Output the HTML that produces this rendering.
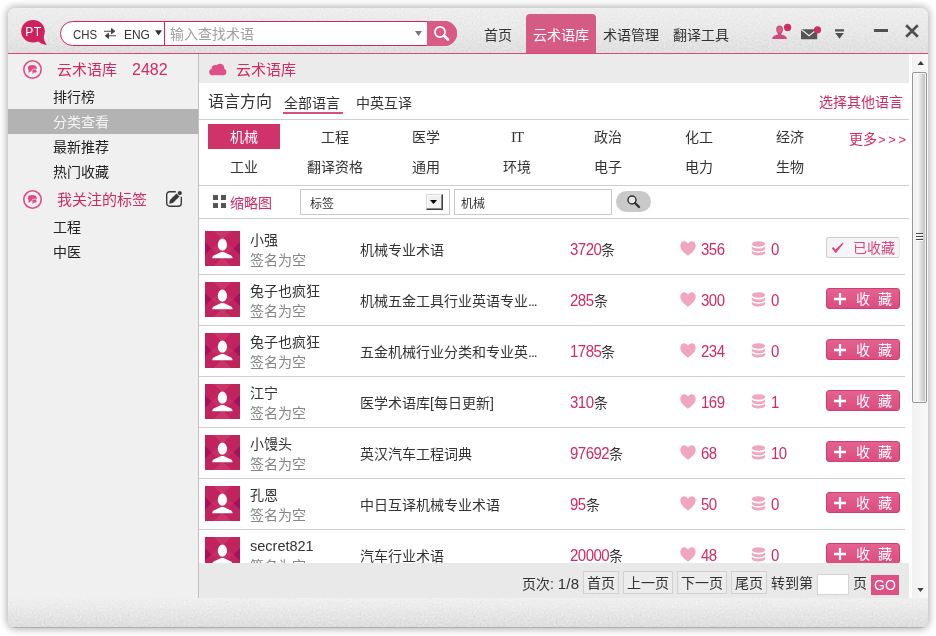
<!DOCTYPE html>
<html lang="zh-CN">
<head>
<meta charset="utf-8">
<title>云术语库</title>
<style>
*{box-sizing:border-box;margin:0;padding:0}
html,body{width:936px;height:636px;overflow:hidden;background:#fff}
body{font-family:"Liberation Sans",sans-serif;font-size:14px;color:#333;position:relative}
.abs{position:absolute}
#win{position:absolute;left:8px;top:8px;width:920px;height:620px;border-radius:7px 7px 8px 8px;background:#f0f0f0;box-shadow:0 0 7px 2px rgba(0,0,0,.27);overflow:hidden}
#hdr{position:absolute;left:0;top:0;width:920px;height:46px;background:linear-gradient(#eeeeee,#e9e9e9 50%,#dfdfdf)}
#hline{position:absolute;left:0;top:45px;width:920px;height:1px;background:#d9477a}
#side{position:absolute;left:0;top:46px;width:190px;height:544px;background:#f0f0f0}
#vline{position:absolute;left:190px;top:46px;width:1px;height:544px;background:#c0c0c0}
#main{position:absolute;left:191px;top:46px;width:710px;height:544px;background:#fff;overflow:hidden}
#gap{position:absolute;left:901px;top:46px;width:3px;height:544px;background:#fff}
#sb{position:absolute;left:904px;top:46px;width:16px;height:544px;background:linear-gradient(90deg,#f1f1f1,#f9f9f9)}
#foot{position:absolute;left:0;top:590px;width:920px;height:30px;background:linear-gradient(#f0f0f0,#e8e8e8 50%,#dedede);border-bottom:1px solid #aeaeae}
.t{position:absolute;white-space:nowrap;line-height:20px;height:20px}
.pk{color:#d12a65}
.hl{position:absolute;height:1px;background:#cfcfcf}

#pill{left:52px;top:13px;width:397px;height:25px;border:1.500px solid #d2255f;border-radius:13px;background:#fff}
#pillL{left:52px;top:13px;width:105px;height:25px;border-right:1.500px solid #d2255f;color:#333}
#sbtn{left:419px;top:13px;width:30px;height:25px;background:#d85a85;border-radius:0 13px 13px 0}
#tab{left:518px;top:6px;width:70px;height:40px;background:#d55b85;border-radius:4px 4px 0 0}
.nav{font-size:14px;color:#333}

.si{left:45px;font-size:14px;color:#222}
.ct{width:100px;text-align:center;font-size:14px;color:#333}
.row{position:absolute;left:0;width:710px;height:51px}
.num{font-size:15px}
.btn{left:627px;top:18px;width:74px;height:21px;border-radius:3px;line-height:20px}
.btn .t{line-height:20px}
.fav{background:#f5f5f5;border:1px solid #cfcfcf;border-right-color:#eee}
.fav .pk{color:#df4480}
.fav .t{top:0 !important}
.add{background:linear-gradient(#e4628f,#dc4c80);border:1px solid #cf3d72}

#pg{left:0;top:509px;width:710px;height:35px;background:#e9e9e9}
.pb{top:8px;height:23px;border:1px solid #d2d2d2;background:#ececec;text-align:center;line-height:22px;font-size:14px;color:#333}
#thumb{left:0;top:18px;width:15px;height:331px;border:1px solid #959595;border-radius:2px;box-shadow:inset 0 0 0 1px rgba(255,255,255,.75);background:linear-gradient(90deg,#e8e8e8,#f8f8f8 35%,#d4d4d6 70%,#bfbfc2)}

.nar{display:inline-block;transform:scaleX(.88);transform-origin:0 50%}
.num{letter-spacing:-.5px;display:inline-block;transform:scaleY(1.07);transform-origin:0 76%}
.el{letter-spacing:-1px}
.nzo{mix-blend-mode:overlay;opacity:.85}
</style>
</head>
<body>
<svg width="0" height="0" style="position:absolute"><filter id="nz" x="0" y="0" width="100%" height="100%" color-interpolation-filters="sRGB"><feTurbulence type="fractalNoise" baseFrequency=".5" numOctaves="2" seed="7" result="t"/><feColorMatrix type="matrix" values=".33 .33 .33 0 0  .33 .33 .33 0 0  .33 .33 .33 0 0  0 0 0 0 1"/></filter></svg>
<div id="win">
  <div id="hdr"><svg class="abs nzo" style="left:0;top:0" width="920" height="46"><rect width="920" height="46" filter="url(#nz)"/></svg>
    <svg class="abs" style="left:12px;top:10px" width="30" height="30" viewBox="0 0 30 30"><ellipse cx="13" cy="13.200" rx="11.800" ry="11.300" fill="#d0215f"/><path d="M23.800 17.500C23.600 21.500 24.800 24.600 27 26.900 23.300 26.700 20.300 25.400 17.500 23z" fill="#d0215f"/><text x="13.500" y="18" font-family="Liberation Sans,sans-serif" font-size="12" fill="#fff" text-anchor="middle" letter-spacing=".6">PT</text></svg>
    <div class="abs" id="pill"></div>
    <div class="abs" id="pillL"><span class="t nar" style="left:13px;top:4px;font-size:13px">CHS</span><svg class="abs" style="left:43px;top:7px" width="14" height="11" viewBox="0 0 14 11"><path d="M1 3.200h9.500M8.500 0.800l3 2.400-3 2.400zM13 7.800H3.500M5.500 5.400l-3 2.400 3 2.400z" stroke="#484848" stroke-width="1.100" fill="#484848" stroke-linejoin="round"/></svg><span class="t nar" style="left:63.500px;top:4px;font-size:13px;transform:scaleX(.92)">ENG</span><svg class="abs" style="left:95px;top:9px" width="7" height="5.500" viewBox="0 0 8 6"><path d="M0 0h8L4 6z" fill="#333"/></svg></div>
    <span class="t" style="left:162px;top:16px;font-size:14px;color:#a0a0a0">输入查找术语</span>
    <svg class="abs" style="left:407px;top:23px" width="7" height="5" viewBox="0 0 7 5"><path d="M0 0h7L3.500 5z" fill="#777"/></svg>
    <div class="abs" id="sbtn"><svg class="abs" style="left:5px;top:4px" width="18" height="18" viewBox="0 0 18 18"><circle cx="8" cy="7" r="5.100" fill="none" stroke="#fff" stroke-width="1.700"/><path d="M12 10.800l4 3.600" stroke="#fff" stroke-width="2.700" stroke-linecap="round"/></svg></div>
    <span class="t nav" style="left:476px;top:17px">首页</span>
    <div class="abs" id="tab"><span class="t" style="left:7px;top:11px;color:#fff;font-size:14px">云术语库</span></div>
    <span class="t nav" style="left:595px;top:17px">术语管理</span>
    <span class="t nav" style="left:665px;top:17px">翻译工具</span>
    <svg class="abs" style="left:763px;top:15px" width="22" height="18" viewBox="0 0 22 18"><defs><linearGradient id="ug" x1="0" y1="0" x2="0" y2="1"><stop offset="0" stop-color="#c0507a"/><stop offset="1" stop-color="#d4477a"/></linearGradient></defs><path d="M8.600 2.600c2.200 0 3.400 1.600 3.400 3.700 0 1.800-.8 3.300-1.800 4.100v1c3.300.9 5.600 1.800 5.800 4.700H1.200c.2-2.900 2.500-3.800 5.800-4.700v-1C6 9.600 5.200 8.100 5.200 6.300c0-2.100 1.200-3.700 3.400-3.700z" fill="url(#ug)"/><ellipse cx="8.600" cy="6.600" rx="2.100" ry="2.900" fill="#e06a94" opacity=".7"/><circle cx="16.600" cy="4.400" r="3.600" fill="#d42a63"/></svg>
    <svg class="abs" style="left:792px;top:18px" width="22" height="14" viewBox="0 0 22 14"><path d="M1 3.200h16.200v10H1z" fill="#555"/><path d="M1.300 3.500l7.800 6.200 7.800-6.200" fill="none" stroke="#e8e8e8" stroke-width="1.200"/><circle cx="17.500" cy="3.800" r="3.600" fill="#d42a63"/></svg>
    <svg class="abs" style="left:826px;top:20px" width="11" height="11" viewBox="0 0 11 11"><path d="M1 1.200h9v2.300h-9zM1.200 5h8.600l-4.300 5.700z" fill="#505050"/></svg>
    <div class="abs" style="left:866px;top:21px;width:14px;height:3px;background:#505050"></div>
    <svg class="abs" style="left:896px;top:15px" width="16" height="16" viewBox="0 0 16 16"><path d="M2.200 2.200l11.600 11.600M13.800 2.200L2.200 13.800" stroke="#505050" stroke-width="2.700" stroke-linecap="butt"/></svg>
  </div>
  <div id="hline"></div>
  <div id="side">
    <svg class="abs" style="left:14px;top:5px" width="21" height="21" viewBox="0 0 21 21"><circle cx="10.500" cy="10.500" r="8.700" fill="none" stroke="#e04a82" stroke-width="1.600"/><ellipse cx="10.300" cy="9.100" rx="4.500" ry="3.100" fill="#e04a82"/><path d="M7 10.500L6.300 14.100 9.800 11.800z" fill="#e04a82"/><rect x="9.850" y="10.200" width="5.100" height="3.800" rx="1.700" fill="#e04a82" stroke="#f0f0f0" stroke-width=".8"/><path d="M10.600 13.200L10.200 15 12.400 13.800z" fill="#e04a82"/></svg>
    <span class="t pk" style="left:49px;top:6px;font-size:15px">云术语库</span><span class="t pk" style="left:124px;top:6px;font-size:16px">2482</span>
    <span class="t si" style="top:33px">排行榜</span>
    <div class="abs" style="left:0;top:55px;width:190px;height:25px;background:#b3b3b3"></div>
    <span class="t si" style="top:58px;color:#f4f4f4">分类查看</span>
    <span class="t si" style="top:83px">最新推荐</span>
    <span class="t si" style="top:108px">热门收藏</span>
    <svg class="abs" style="left:14px;top:135px" width="21" height="21" viewBox="0 0 21 21"><circle cx="10.500" cy="10.500" r="8.700" fill="none" stroke="#e04a82" stroke-width="1.600"/><ellipse cx="10.300" cy="9.100" rx="4.500" ry="3.100" fill="#e04a82"/><path d="M7 10.500L6.300 14.100 9.800 11.800z" fill="#e04a82"/><rect x="9.850" y="10.200" width="5.100" height="3.800" rx="1.700" fill="#e04a82" stroke="#f0f0f0" stroke-width=".8"/><path d="M10.600 13.200L10.200 15 12.400 13.800z" fill="#e04a82"/></svg>
    <span class="t pk" style="left:49px;top:136px;font-size:15px">我关注的标签</span>
    <svg class="abs" style="left:157px;top:136px" width="19" height="19" viewBox="0 0 19 19"><path d="M10.800 1.700H4.700a3 3 0 0 0-3 3v8.500a3 3 0 0 0 3 3h8.600a3 3 0 0 0 3-3V6.700" fill="#f4f4f4" stroke="#3a3a3a" stroke-width="1.400"/><path d="M4.200 13.700L4.900 10 11.500 3.400 14.500 6.400 7.900 13z" fill="#3a3a3a"/><circle cx="14.800" cy="3.100" r="2.100" fill="#3a3a3a"/></svg>
    <span class="t si" style="top:163px">工程</span>
    <span class="t si" style="top:188px">中医</span>
  </div>
  <div id="vline"></div>
  <div id="main">
<div class="abs" style="left:0;top:0;width:710px;height:29px;background:#ebebeb"></div>
<svg class="abs" style="left:9px;top:9px" width="19" height="13" viewBox="0 0 19 13"><g fill="#df5088"><circle cx="4.200" cy="9.100" r="3.100"/><circle cx="7.200" cy="5.700" r="3.600"/><circle cx="12" cy="5.100" r="4.400"/><circle cx="15.100" cy="9" r="3.200"/><rect x="4.200" y="6" width="11" height="6.200"/></g></svg>
<span class="t pk" style="left:37px;top:6px;font-size:15px">云术语库</span>
<span class="t" style="left:9px;top:38px;font-size:16px;color:#333;font-weight:300">语言方向</span>
<span class="t" style="left:85px;top:39px;color:#333">全部语言</span>
<div class="abs" style="left:84px;top:58px;width:60px;height:2px;background:#d9507f"></div>
<span class="t" style="left:157px;top:39px;color:#333">中英互译</span>
<span class="t pk" style="left:620px;top:38px">选择其他语言</span>
<div class="hl" style="left:0;top:65px;width:710px"></div>
<div class="abs" style="left:9px;top:70px;width:72px;height:25px;background:#d0336a"></div>
<span class="t ct" style="left:-5px;top:73px;color:#fff;">机械</span>
<span class="t ct" style="left:86px;top:73px;">工程</span>
<span class="t ct" style="left:177px;top:73px;">医学</span>
<span class="t ct" style="left:268px;top:73px;font-family:'Liberation Serif',serif;font-size:15px;letter-spacing:-1px;">IT</span>
<span class="t ct" style="left:359px;top:73px;">政治</span>
<span class="t ct" style="left:450px;top:73px;">化工</span>
<span class="t ct" style="left:541px;top:73px;">经济</span>
<span class="t ct" style="left:-5px;top:103px">工业</span>
<span class="t ct" style="left:86px;top:103px">翻译资格</span>
<span class="t ct" style="left:177px;top:103px">通用</span>
<span class="t ct" style="left:268px;top:103px">环境</span>
<span class="t ct" style="left:359px;top:103px">电子</span>
<span class="t ct" style="left:450px;top:103px">电力</span>
<span class="t ct" style="left:541px;top:103px">生物</span>
<span class="t pk" style="left:650px;top:75px">更多<span style="letter-spacing:2.700px;font-size:13px;margin-left:1px">&gt;&gt;&gt;</span></span>
<div class="hl" style="left:0;top:131px;width:710px"></div>
<svg class="abs" style="left:14px;top:141px" width="13" height="13" viewBox="0 0 13 13"><path d="M0 0h5v5H0zM8 0h5v5H8zM0 8h5v5H0zM8 8h5v5H8z" fill="#555"/></svg>
<span class="t pk" style="left:31px;top:139px">缩略图</span>
<div class="abs" style="left:101px;top:135px;width:150px;height:26px;background:#fff;border:1px solid #c8c8c8"><span class="t" style="left:9px;top:4px;font-size:12px">标签</span><div class="abs" style="left:125px;top:4px;width:17px;height:16px;background:#f0f0f0;border:1px solid;border-color:#d8d8d8 #404040 #404040 #d8d8d8;box-shadow:inset -1px -1px 0 #888,inset 1px 1px 0 #fff"><svg class="abs" style="left:3px;top:5px" width="7" height="4" viewBox="0 0 7 4"><path d="M0 0h7L3.500 4z" fill="#000"/></svg></div></div>
<div class="abs" style="left:255px;top:135px;width:158px;height:26px;background:#fff;border:1px solid #c8c8c8"><span class="t" style="left:6px;top:4px;font-size:12px">机械</span></div>
<div class="abs" style="left:417px;top:137px;width:35px;height:21px;border-radius:11px;background:#c9c9c9"><svg class="abs" style="left:10px;top:3px" width="15" height="15" viewBox="0 0 15 15"><circle cx="6" cy="6" r="4" fill="#e8e8e8" stroke="#333" stroke-width="1.500"/><path d="M9 9l4 4" stroke="#333" stroke-width="2.400" stroke-linecap="round"/></svg></div>
<div class="hl" style="left:0;top:164px;width:710px"></div>
<div class="row" style="top:165px">
<svg class="abs" style="left:6px;top:12px" width="35" height="35" viewBox="0 0 35 35"><rect width="35" height="35" fill="#c1235f"/><path d="M0 11.300L6.400 17.400 0 23.500z" fill="#a80f5d"/><path d="M35 11.300L28.600 17.400 35 23.500z" fill="#a80f5d"/><path d="M8.500 0h17.700L17.400 8.800z" fill="#c93568"/><path d="M8.500 35h17.700L17.400 26.200z" fill="#c93568"/><path d="M6.400 17.400L17.400 8.800 28.600 17.400 17.400 26.200z" fill="#c62e65"/><ellipse cx="17.400" cy="13.700" rx="4.600" ry="6.100" fill="#fff"/><path d="M7.200 27.200c0-1.500.8-2.600 2.500-3.300l5.400-2.400c1.400-.6 3.200-.6 4.600 0l5.400 2.400c1.700.7 2.500 1.800 2.500 3.300z" fill="#fff"/></svg>
<span class="t" style="left:51px;top:11px;color:#333">小强</span>
<span class="t" style="left:51px;top:31px;color:#858585">签名为空</span>
<span class="t" style="left:161px;top:21px;color:#333">机械专业术语</span>
<span class="t" style="left:371px;top:21px;color:#333"><span class="pk num">3720</span>条</span>
<svg class="abs" style="left:481px;top:22px" width="16" height="15" viewBox="0 0 17 15" preserveAspectRatio="none"><path d="M8.500 14.800C3.500 11 .3 8.200.3 4.700.3 2.200 2.200.3 4.500.3c1.700 0 3.200 1 4 2.400.8-1.400 2.300-2.400 4-2.400 2.300 0 4.200 1.900 4.200 4.400 0 3.500-3.200 6.300-8.200 10.100z" fill="#f0a6c0"/></svg>
<span class="t pk num" style="left:502px;top:21px">356</span>
<svg class="abs" style="left:552px;top:22px" width="15" height="15" viewBox="0 0 15 15"><g fill="#f0a6c0"><ellipse cx="7.500" cy="3" rx="6.700" ry="2.800"/><path d="M.8 5.300c1 1.500 3.600 2.200 6.700 2.200s5.700-.7 6.700-2.200v2.300c0 1.500-3 2.700-6.700 2.700S.8 9.100.8 7.600z"/><path d="M.8 9.500c1 1.500 3.600 2.200 6.700 2.200s5.700-.7 6.700-2.200v2.300c0 1.500-3 2.700-6.700 2.700S.8 13.300.8 11.800z"/></g></svg>
<span class="t pk num" style="left:572px;top:21px">0</span>
<div class="abs btn fav"><svg class="abs" style="left:4px;top:4px" width="13" height="12" viewBox="0 0 13 12"><path d="M.8 6.200l1.400-1.200 2.300 2.600L11.600.8l.9.700-7.700 9.800z" fill="#df4480"/></svg><span class="t pk" style="left:26px;top:0;font-size:14px">已收藏</span></div>
<div class="hl" style="left:0;top:55px;width:706px"></div>
</div>
<div class="row" style="top:216px">
<svg class="abs" style="left:6px;top:12px" width="35" height="35" viewBox="0 0 35 35"><rect width="35" height="35" fill="#c1235f"/><path d="M0 11.300L6.400 17.400 0 23.500z" fill="#a80f5d"/><path d="M35 11.300L28.600 17.400 35 23.500z" fill="#a80f5d"/><path d="M8.500 0h17.700L17.400 8.800z" fill="#c93568"/><path d="M8.500 35h17.700L17.400 26.200z" fill="#c93568"/><path d="M6.400 17.400L17.400 8.800 28.600 17.400 17.400 26.200z" fill="#c62e65"/><ellipse cx="17.400" cy="13.700" rx="4.600" ry="6.100" fill="#fff"/><path d="M7.200 27.200c0-1.500.8-2.600 2.500-3.300l5.400-2.400c1.400-.6 3.200-.6 4.600 0l5.400 2.400c1.700.7 2.500 1.800 2.500 3.300z" fill="#fff"/></svg>
<span class="t" style="left:51px;top:11px;color:#333">兔子也疯狂</span>
<span class="t" style="left:51px;top:31px;color:#858585">签名为空</span>
<span class="t" style="left:161px;top:21px;color:#333">机械五金工具行业英语专业<span class="el">...</span></span>
<span class="t" style="left:371px;top:21px;color:#333"><span class="pk num">285</span>条</span>
<svg class="abs" style="left:481px;top:22px" width="16" height="15" viewBox="0 0 17 15" preserveAspectRatio="none"><path d="M8.500 14.800C3.500 11 .3 8.200.3 4.700.3 2.200 2.200.3 4.500.3c1.700 0 3.200 1 4 2.400.8-1.400 2.300-2.400 4-2.400 2.300 0 4.200 1.900 4.200 4.400 0 3.500-3.200 6.300-8.200 10.100z" fill="#f0a6c0"/></svg>
<span class="t pk num" style="left:502px;top:21px">300</span>
<svg class="abs" style="left:552px;top:22px" width="15" height="15" viewBox="0 0 15 15"><g fill="#f0a6c0"><ellipse cx="7.500" cy="3" rx="6.700" ry="2.800"/><path d="M.8 5.300c1 1.500 3.600 2.200 6.700 2.200s5.700-.7 6.700-2.200v2.300c0 1.500-3 2.700-6.700 2.700S.8 9.100.8 7.600z"/><path d="M.8 9.500c1 1.500 3.600 2.200 6.700 2.200s5.700-.7 6.700-2.200v2.300c0 1.500-3 2.700-6.700 2.700S.8 13.300.8 11.800z"/></g></svg>
<span class="t pk num" style="left:572px;top:21px">0</span>
<div class="abs btn add"><svg class="abs" style="left:7px;top:4px" width="12" height="12" viewBox="0 0 12 12"><path d="M6 0v12M0 6h12" stroke="#fff" stroke-width="2.300"/></svg><span class="t" style="left:29px;top:0;color:#fff;font-size:14px;letter-spacing:8px">收藏</span></div>
<div class="hl" style="left:0;top:55px;width:706px"></div>
</div>
<div class="row" style="top:267px">
<svg class="abs" style="left:6px;top:12px" width="35" height="35" viewBox="0 0 35 35"><rect width="35" height="35" fill="#c1235f"/><path d="M0 11.300L6.400 17.400 0 23.500z" fill="#a80f5d"/><path d="M35 11.300L28.600 17.400 35 23.500z" fill="#a80f5d"/><path d="M8.500 0h17.700L17.400 8.800z" fill="#c93568"/><path d="M8.500 35h17.700L17.400 26.200z" fill="#c93568"/><path d="M6.400 17.400L17.400 8.800 28.600 17.400 17.400 26.200z" fill="#c62e65"/><ellipse cx="17.400" cy="13.700" rx="4.600" ry="6.100" fill="#fff"/><path d="M7.200 27.200c0-1.500.8-2.600 2.500-3.300l5.400-2.400c1.400-.6 3.200-.6 4.600 0l5.400 2.400c1.700.7 2.500 1.800 2.500 3.300z" fill="#fff"/></svg>
<span class="t" style="left:51px;top:11px;color:#333">兔子也疯狂</span>
<span class="t" style="left:51px;top:31px;color:#858585">签名为空</span>
<span class="t" style="left:161px;top:21px;color:#333">五金机械行业分类和专业英<span class="el">...</span></span>
<span class="t" style="left:371px;top:21px;color:#333"><span class="pk num">1785</span>条</span>
<svg class="abs" style="left:481px;top:22px" width="16" height="15" viewBox="0 0 17 15" preserveAspectRatio="none"><path d="M8.500 14.800C3.500 11 .3 8.200.3 4.700.3 2.200 2.200.3 4.500.3c1.700 0 3.200 1 4 2.400.8-1.400 2.300-2.400 4-2.400 2.300 0 4.200 1.900 4.200 4.400 0 3.500-3.200 6.300-8.200 10.100z" fill="#f0a6c0"/></svg>
<span class="t pk num" style="left:502px;top:21px">234</span>
<svg class="abs" style="left:552px;top:22px" width="15" height="15" viewBox="0 0 15 15"><g fill="#f0a6c0"><ellipse cx="7.500" cy="3" rx="6.700" ry="2.800"/><path d="M.8 5.300c1 1.500 3.600 2.200 6.700 2.200s5.700-.7 6.700-2.200v2.300c0 1.500-3 2.700-6.700 2.700S.8 9.100.8 7.600z"/><path d="M.8 9.500c1 1.500 3.600 2.200 6.700 2.200s5.700-.7 6.700-2.200v2.300c0 1.500-3 2.700-6.700 2.700S.8 13.300.8 11.800z"/></g></svg>
<span class="t pk num" style="left:572px;top:21px">0</span>
<div class="abs btn add"><svg class="abs" style="left:7px;top:4px" width="12" height="12" viewBox="0 0 12 12"><path d="M6 0v12M0 6h12" stroke="#fff" stroke-width="2.300"/></svg><span class="t" style="left:29px;top:0;color:#fff;font-size:14px;letter-spacing:8px">收藏</span></div>
<div class="hl" style="left:0;top:55px;width:706px"></div>
</div>
<div class="row" style="top:318px">
<svg class="abs" style="left:6px;top:12px" width="35" height="35" viewBox="0 0 35 35"><rect width="35" height="35" fill="#c1235f"/><path d="M0 11.300L6.400 17.400 0 23.500z" fill="#a80f5d"/><path d="M35 11.300L28.600 17.400 35 23.500z" fill="#a80f5d"/><path d="M8.500 0h17.700L17.400 8.800z" fill="#c93568"/><path d="M8.500 35h17.700L17.400 26.200z" fill="#c93568"/><path d="M6.400 17.400L17.400 8.800 28.600 17.400 17.400 26.200z" fill="#c62e65"/><ellipse cx="17.400" cy="13.700" rx="4.600" ry="6.100" fill="#fff"/><path d="M7.200 27.200c0-1.500.8-2.600 2.500-3.300l5.400-2.400c1.400-.6 3.200-.6 4.600 0l5.400 2.400c1.700.7 2.500 1.800 2.500 3.300z" fill="#fff"/></svg>
<span class="t" style="left:51px;top:11px;color:#333">江宁</span>
<span class="t" style="left:51px;top:31px;color:#858585">签名为空</span>
<span class="t" style="left:161px;top:21px;color:#333">医学术语库[每日更新]</span>
<span class="t" style="left:371px;top:21px;color:#333"><span class="pk num">310</span>条</span>
<svg class="abs" style="left:481px;top:22px" width="16" height="15" viewBox="0 0 17 15" preserveAspectRatio="none"><path d="M8.500 14.800C3.500 11 .3 8.200.3 4.700.3 2.200 2.200.3 4.500.3c1.700 0 3.200 1 4 2.400.8-1.400 2.300-2.400 4-2.400 2.300 0 4.200 1.900 4.200 4.400 0 3.500-3.200 6.300-8.200 10.100z" fill="#f0a6c0"/></svg>
<span class="t pk num" style="left:502px;top:21px">169</span>
<svg class="abs" style="left:552px;top:22px" width="15" height="15" viewBox="0 0 15 15"><g fill="#f0a6c0"><ellipse cx="7.500" cy="3" rx="6.700" ry="2.800"/><path d="M.8 5.300c1 1.500 3.600 2.200 6.700 2.200s5.700-.7 6.700-2.200v2.300c0 1.500-3 2.700-6.700 2.700S.8 9.100.8 7.600z"/><path d="M.8 9.500c1 1.500 3.600 2.200 6.700 2.200s5.700-.7 6.700-2.200v2.300c0 1.500-3 2.700-6.700 2.700S.8 13.300.8 11.800z"/></g></svg>
<span class="t pk num" style="left:572px;top:21px">1</span>
<div class="abs btn add"><svg class="abs" style="left:7px;top:4px" width="12" height="12" viewBox="0 0 12 12"><path d="M6 0v12M0 6h12" stroke="#fff" stroke-width="2.300"/></svg><span class="t" style="left:29px;top:0;color:#fff;font-size:14px;letter-spacing:8px">收藏</span></div>
<div class="hl" style="left:0;top:55px;width:706px"></div>
</div>
<div class="row" style="top:369px">
<svg class="abs" style="left:6px;top:12px" width="35" height="35" viewBox="0 0 35 35"><rect width="35" height="35" fill="#c1235f"/><path d="M0 11.300L6.400 17.400 0 23.500z" fill="#a80f5d"/><path d="M35 11.300L28.600 17.400 35 23.500z" fill="#a80f5d"/><path d="M8.500 0h17.700L17.400 8.800z" fill="#c93568"/><path d="M8.500 35h17.700L17.400 26.200z" fill="#c93568"/><path d="M6.400 17.400L17.400 8.800 28.600 17.400 17.400 26.200z" fill="#c62e65"/><ellipse cx="17.400" cy="13.700" rx="4.600" ry="6.100" fill="#fff"/><path d="M7.200 27.200c0-1.500.8-2.600 2.500-3.300l5.400-2.400c1.400-.6 3.200-.6 4.600 0l5.400 2.400c1.700.7 2.500 1.800 2.500 3.300z" fill="#fff"/></svg>
<span class="t" style="left:51px;top:11px;color:#333">小馒头</span>
<span class="t" style="left:51px;top:31px;color:#858585">签名为空</span>
<span class="t" style="left:161px;top:21px;color:#333">英汉汽车工程词典</span>
<span class="t" style="left:371px;top:21px;color:#333"><span class="pk num">97692</span>条</span>
<svg class="abs" style="left:481px;top:22px" width="16" height="15" viewBox="0 0 17 15" preserveAspectRatio="none"><path d="M8.500 14.800C3.500 11 .3 8.200.3 4.700.3 2.200 2.200.3 4.500.3c1.700 0 3.200 1 4 2.400.8-1.400 2.300-2.400 4-2.400 2.300 0 4.200 1.900 4.200 4.400 0 3.500-3.200 6.300-8.200 10.100z" fill="#f0a6c0"/></svg>
<span class="t pk num" style="left:502px;top:21px">68</span>
<svg class="abs" style="left:552px;top:22px" width="15" height="15" viewBox="0 0 15 15"><g fill="#f0a6c0"><ellipse cx="7.500" cy="3" rx="6.700" ry="2.800"/><path d="M.8 5.300c1 1.500 3.600 2.200 6.700 2.200s5.700-.7 6.700-2.200v2.300c0 1.500-3 2.700-6.700 2.700S.8 9.100.8 7.600z"/><path d="M.8 9.500c1 1.500 3.600 2.200 6.700 2.200s5.700-.7 6.700-2.200v2.300c0 1.500-3 2.700-6.700 2.700S.8 13.300.8 11.800z"/></g></svg>
<span class="t pk num" style="left:572px;top:21px">10</span>
<div class="abs btn add"><svg class="abs" style="left:7px;top:4px" width="12" height="12" viewBox="0 0 12 12"><path d="M6 0v12M0 6h12" stroke="#fff" stroke-width="2.300"/></svg><span class="t" style="left:29px;top:0;color:#fff;font-size:14px;letter-spacing:8px">收藏</span></div>
<div class="hl" style="left:0;top:55px;width:706px"></div>
</div>
<div class="row" style="top:420px">
<svg class="abs" style="left:6px;top:12px" width="35" height="35" viewBox="0 0 35 35"><rect width="35" height="35" fill="#c1235f"/><path d="M0 11.300L6.400 17.400 0 23.500z" fill="#a80f5d"/><path d="M35 11.300L28.600 17.400 35 23.500z" fill="#a80f5d"/><path d="M8.500 0h17.700L17.400 8.800z" fill="#c93568"/><path d="M8.500 35h17.700L17.400 26.200z" fill="#c93568"/><path d="M6.400 17.400L17.400 8.800 28.600 17.400 17.400 26.200z" fill="#c62e65"/><ellipse cx="17.400" cy="13.700" rx="4.600" ry="6.100" fill="#fff"/><path d="M7.200 27.200c0-1.500.8-2.600 2.500-3.300l5.400-2.400c1.400-.6 3.200-.6 4.600 0l5.400 2.400c1.700.7 2.500 1.800 2.500 3.300z" fill="#fff"/></svg>
<span class="t" style="left:51px;top:11px;color:#333">孔恩</span>
<span class="t" style="left:51px;top:31px;color:#858585">签名为空</span>
<span class="t" style="left:161px;top:21px;color:#333">中日互译机械专业术语</span>
<span class="t" style="left:371px;top:21px;color:#333"><span class="pk num">95</span>条</span>
<svg class="abs" style="left:481px;top:22px" width="16" height="15" viewBox="0 0 17 15" preserveAspectRatio="none"><path d="M8.500 14.800C3.500 11 .3 8.200.3 4.700.3 2.200 2.200.3 4.500.3c1.700 0 3.200 1 4 2.400.8-1.400 2.300-2.400 4-2.400 2.300 0 4.200 1.900 4.200 4.400 0 3.500-3.200 6.300-8.200 10.100z" fill="#f0a6c0"/></svg>
<span class="t pk num" style="left:502px;top:21px">50</span>
<svg class="abs" style="left:552px;top:22px" width="15" height="15" viewBox="0 0 15 15"><g fill="#f0a6c0"><ellipse cx="7.500" cy="3" rx="6.700" ry="2.800"/><path d="M.8 5.300c1 1.500 3.600 2.200 6.700 2.200s5.700-.7 6.700-2.200v2.300c0 1.500-3 2.700-6.700 2.700S.8 9.100.8 7.600z"/><path d="M.8 9.500c1 1.500 3.600 2.200 6.700 2.200s5.700-.7 6.700-2.200v2.300c0 1.500-3 2.700-6.700 2.700S.8 13.300.8 11.800z"/></g></svg>
<span class="t pk num" style="left:572px;top:21px">0</span>
<div class="abs btn add"><svg class="abs" style="left:7px;top:4px" width="12" height="12" viewBox="0 0 12 12"><path d="M6 0v12M0 6h12" stroke="#fff" stroke-width="2.300"/></svg><span class="t" style="left:29px;top:0;color:#fff;font-size:14px;letter-spacing:8px">收藏</span></div>
<div class="hl" style="left:0;top:55px;width:706px"></div>
</div>
<div class="row" style="top:471px">
<svg class="abs" style="left:6px;top:12px" width="35" height="35" viewBox="0 0 35 35"><rect width="35" height="35" fill="#c1235f"/><path d="M0 11.300L6.400 17.400 0 23.500z" fill="#a80f5d"/><path d="M35 11.300L28.600 17.400 35 23.500z" fill="#a80f5d"/><path d="M8.500 0h17.700L17.400 8.800z" fill="#c93568"/><path d="M8.500 35h17.700L17.400 26.200z" fill="#c93568"/><path d="M6.400 17.400L17.400 8.800 28.600 17.400 17.400 26.200z" fill="#c62e65"/><ellipse cx="17.400" cy="13.700" rx="4.600" ry="6.100" fill="#fff"/><path d="M7.200 27.200c0-1.500.8-2.600 2.500-3.300l5.400-2.400c1.400-.6 3.200-.6 4.600 0l5.400 2.400c1.700.7 2.500 1.800 2.500 3.300z" fill="#fff"/></svg>
<span class="t" style="left:51px;top:11px;color:#333;font-size:14.500px">secret821</span>
<span class="t" style="left:51px;top:31px;color:#858585">签名为空</span>
<span class="t" style="left:161px;top:21px;color:#333">汽车行业术语</span>
<span class="t" style="left:371px;top:21px;color:#333"><span class="pk num">20000</span>条</span>
<svg class="abs" style="left:481px;top:22px" width="16" height="15" viewBox="0 0 17 15" preserveAspectRatio="none"><path d="M8.500 14.800C3.500 11 .3 8.200.3 4.700.3 2.200 2.200.3 4.500.3c1.700 0 3.200 1 4 2.400.8-1.400 2.300-2.400 4-2.400 2.300 0 4.200 1.900 4.200 4.400 0 3.500-3.200 6.300-8.200 10.100z" fill="#f0a6c0"/></svg>
<span class="t pk num" style="left:502px;top:21px">48</span>
<svg class="abs" style="left:552px;top:22px" width="15" height="15" viewBox="0 0 15 15"><g fill="#f0a6c0"><ellipse cx="7.500" cy="3" rx="6.700" ry="2.800"/><path d="M.8 5.300c1 1.500 3.600 2.200 6.700 2.200s5.700-.7 6.700-2.200v2.300c0 1.500-3 2.700-6.700 2.700S.8 9.100.8 7.600z"/><path d="M.8 9.500c1 1.500 3.600 2.200 6.700 2.200s5.700-.7 6.700-2.200v2.300c0 1.500-3 2.700-6.700 2.700S.8 13.300.8 11.800z"/></g></svg>
<span class="t pk num" style="left:572px;top:21px">0</span>
<div class="abs btn add"><svg class="abs" style="left:7px;top:4px" width="12" height="12" viewBox="0 0 12 12"><path d="M6 0v12M0 6h12" stroke="#fff" stroke-width="2.300"/></svg><span class="t" style="left:29px;top:0;color:#fff;font-size:14px;letter-spacing:8px">收藏</span></div>
<div class="hl" style="left:0;top:55px;width:706px"></div>
</div>
<div class="abs" id="pg">
<span class="t" style="left:323px;top:11px;color:#333">页次: <span style="font-size:15px;letter-spacing:.2px">1/8</span></span>
<div class="abs pb" style="left:384px;width:36px">首页</div>
<div class="abs pb" style="left:424px;width:50px">上一页</div>
<div class="abs pb" style="left:478px;width:50px">下一页</div>
<div class="abs pb" style="left:532px;width:36px">尾页</div>
<span class="t" style="left:572px;top:10px;color:#333">转到第</span>
<div class="abs" style="left:618px;top:11px;width:32px;height:21px;background:#fff;border:1px solid #d4d4d4"></div>
<span class="t" style="left:654px;top:10px;color:#333">页</span>
<div class="abs" style="left:672px;top:12px;width:28px;height:20px;background:#df5084;color:#fff;font-size:14px;line-height:20px;text-align:center">GO</div>
</div>
</div>
  <div id="gap"></div>
  <div id="sb">
    <svg class="abs" style="left:4.500px;top:6.500px" width="7.500" height="4.500" viewBox="0 0 8 5"><path d="M0 5h8L4 0z" fill="#3a3a3a"/></svg>
    <div class="abs" id="thumb"><div class="abs" style="left:3px;top:160px;width:7px;height:9px;background:repeating-linear-gradient(#444 0 1.300px,#fff 1.300px 2.400px,transparent 2.400px 3px)"></div></div>
    <svg class="abs" style="left:5px;top:534px" width="7" height="4" viewBox="0 0 8 5"><path d="M0 0h8L4 5z" fill="#444"/></svg>
  </div>
  <div id="foot"><svg class="abs nzo" style="left:0;top:0" width="920" height="29"><rect width="920" height="29" filter="url(#nz)"/></svg></div>
</div>
</body>
</html>
